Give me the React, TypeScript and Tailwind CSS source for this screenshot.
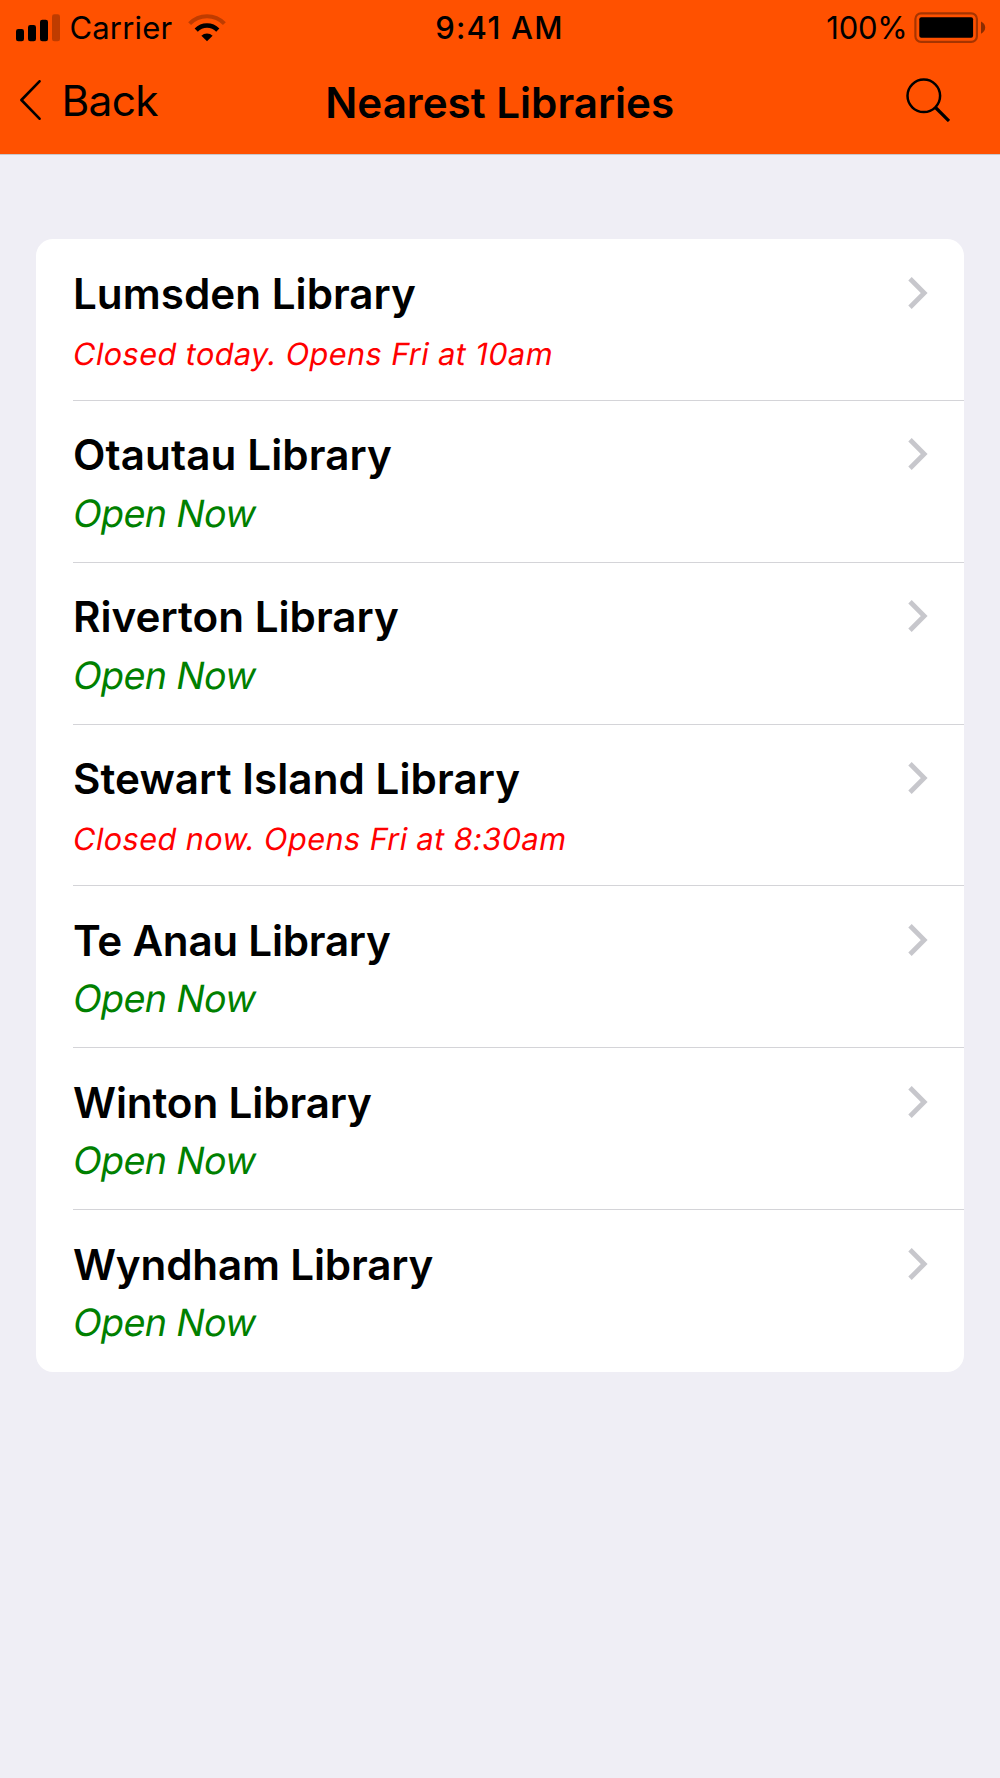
interface Library {
  name: string;
  tracking: string;
  open: boolean;
  status: string;
}

const libraries: Library[] = [
  { name: 'Lumsden Library', tracking: 'tracking-[0.02px]', open: false, status: 'Closed today. Opens Fri at 10am' },
  { name: 'Otautau Library', tracking: 'tracking-[0.11px]', open: true, status: 'Open Now' },
  { name: 'Riverton Library', tracking: 'tracking-[0.01px]', open: true, status: 'Open Now' },
  { name: 'Stewart Island Library', tracking: 'tracking-[0.06px]', open: false, status: 'Closed now. Opens Fri at 8:30am' },
  { name: 'Te Anau Library', tracking: 'tracking-[-0.25px]', open: true, status: 'Open Now' },
  { name: 'Winton Library', tracking: 'tracking-[-0.13px]', open: true, status: 'Open Now' },
  { name: 'Wyndham Library', tracking: 'tracking-[-0.17px]', open: true, status: 'Open Now' },
];

function SignalIcon() {
  return (
    <svg width="44" height="28" viewBox="0 0 44 28">
      <rect x="0" y="15" width="8" height="12.3" rx="2.3" />
      <rect x="12" y="11" width="8" height="16.3" rx="2.3" />
      <rect x="24" y="5.7" width="8" height="21.6" rx="2.3" />
      <rect x="36" y="0.3" width="8" height="27" rx="2.3" opacity="0.25" />
    </svg>
  );
}

function WifiIcon() {
  return (
    <svg width="38" height="28" viewBox="0 0 38 28" fill="none" stroke="black">
      <path d="M1.6 9.6A24 24 0 0 1 36.4 9.6" strokeWidth="4" opacity="0.25" />
      <path d="M8.2 16.1A15 15 0 0 1 29.8 16.1" strokeWidth="4.4" />
      <path d="M19 27.3 13.4 21.8A7.8 7.8 0 0 1 24.6 21.8Z" fill="black" stroke="none" />
    </svg>
  );
}

function BatteryIcon() {
  return (
    <svg width="72" height="32" viewBox="0 0 72 32">
      <rect x="1.4" y="1.4" width="61.5" height="28.4" rx="5.6" fill="none" stroke="black" strokeWidth="2.2" opacity="0.35" />
      <rect x="5.3" y="5.2" width="53.8" height="20.6" rx="2" />
      <path d="M67 9.5Q71.2 11.5 71.2 15.6T67 21.8Z" opacity="0.45" />
    </svg>
  );
}

function StatusBar() {
  return (
    <div className="grid h-[55px] grid-cols-3 items-center pl-4 pr-[14px] text-[31px] leading-none">
      <div className="flex items-center">
        <SignalIcon />
        <span className="ml-[9.5px] tracking-[0.16px]">Carrier</span>
        <span className="ml-[15.5px]">
          <WifiIcon />
        </span>
      </div>
      <span className="pr-[3px] text-center font-medium tracking-[1.25px]">9:41 AM</span>
      <div className="flex items-center justify-end">
        <span className="mr-[6.5px] tracking-[-0.241px]">100%</span>
        <BatteryIcon />
      </div>
    </div>
  );
}

function NavBar() {
  return (
    <div className="grid h-[92px] grid-cols-[1fr_auto_1fr] items-center pl-[19px] pr-[50.5px]">
      <button className="flex items-center">
        <svg width="22" height="40" viewBox="0 0 22 40" fill="none" stroke="black" strokeWidth="2.6" className="-mt-[3px]">
          <path d="M20.5 1.3 2.4 20 20.5 38.7" strokeLinecap="round" strokeLinejoin="round" />
        </svg>
        <span className="ml-[20.5px] text-[42.5px] leading-none tracking-[-0.7px]">Back</span>
      </button>
      <h1 className="ml-[31px] mt-[5px] text-[42.2px] font-semibold leading-none tracking-[-0.02px]">Nearest Libraries</h1>
      <button className="flex justify-end">
        <svg width="44" height="44" viewBox="0 0 44 44" fill="none" stroke="black" className="-mt-[2px]">
          <circle cx="17.8" cy="17.8" r="16.3" strokeWidth="2.5" />
          <path d="M29.5 29.5 43 43" strokeWidth="3.2" />
        </svg>
      </button>
    </div>
  );
}

function LibraryRow({ library }: { library: Library }) {
  return (
    <li className="flex min-h-0 flex-1 justify-between border-b border-[#d4d4d8] pr-[36px] pt-[29.5px] last:border-transparent">
      <div className="whitespace-nowrap">
        <h2 className={`text-[42.2px] font-semibold leading-[50px] ${library.tracking}`}>{library.name}</h2>
        {/* slanted roman letters, so the "a" keeps both storeys */}
        {library.open ? (
          <p className="-ml-[2px] mt-[9.4px] origin-[0_80%] -skew-x-[10deg] text-[37.6px] leading-[48px] tracking-[-0.62px] text-[#008000]">
            {library.status}
          </p>
        ) : (
          <p className="-ml-[2px] mt-[11px] origin-[0_80%] -skew-x-[10deg] text-[30.7px] leading-[48px] tracking-[0.41px] text-[#ff0000]">
            {library.status}
          </p>
        )}
      </div>
      <svg width="20" height="34" viewBox="0 0 20 34" fill="none" stroke="#c7c7cc" strokeWidth="4.8" className="mt-[7px]">
        <path d="M2 2.7 16.2 17 2 31.3" />
      </svg>
    </li>
  );
}

export default function App() {
  return (
    <div className="min-h-[1778px] bg-[#efeef5] font-['Inter',sans-serif] text-black">
      <header className="h-[154px] bg-[#ff5100]">
        <StatusBar />
        <NavBar />
      </header>
      <main className="border-t border-[#c8c8cc] px-9 pt-[84px]">
        <ul className="flex h-[1133px] flex-col rounded-[17px] bg-white pl-[37px]">
          {libraries.map((library) => (
            <LibraryRow key={library.name} library={library} />
          ))}
        </ul>
      </main>
    </div>
  );
}
